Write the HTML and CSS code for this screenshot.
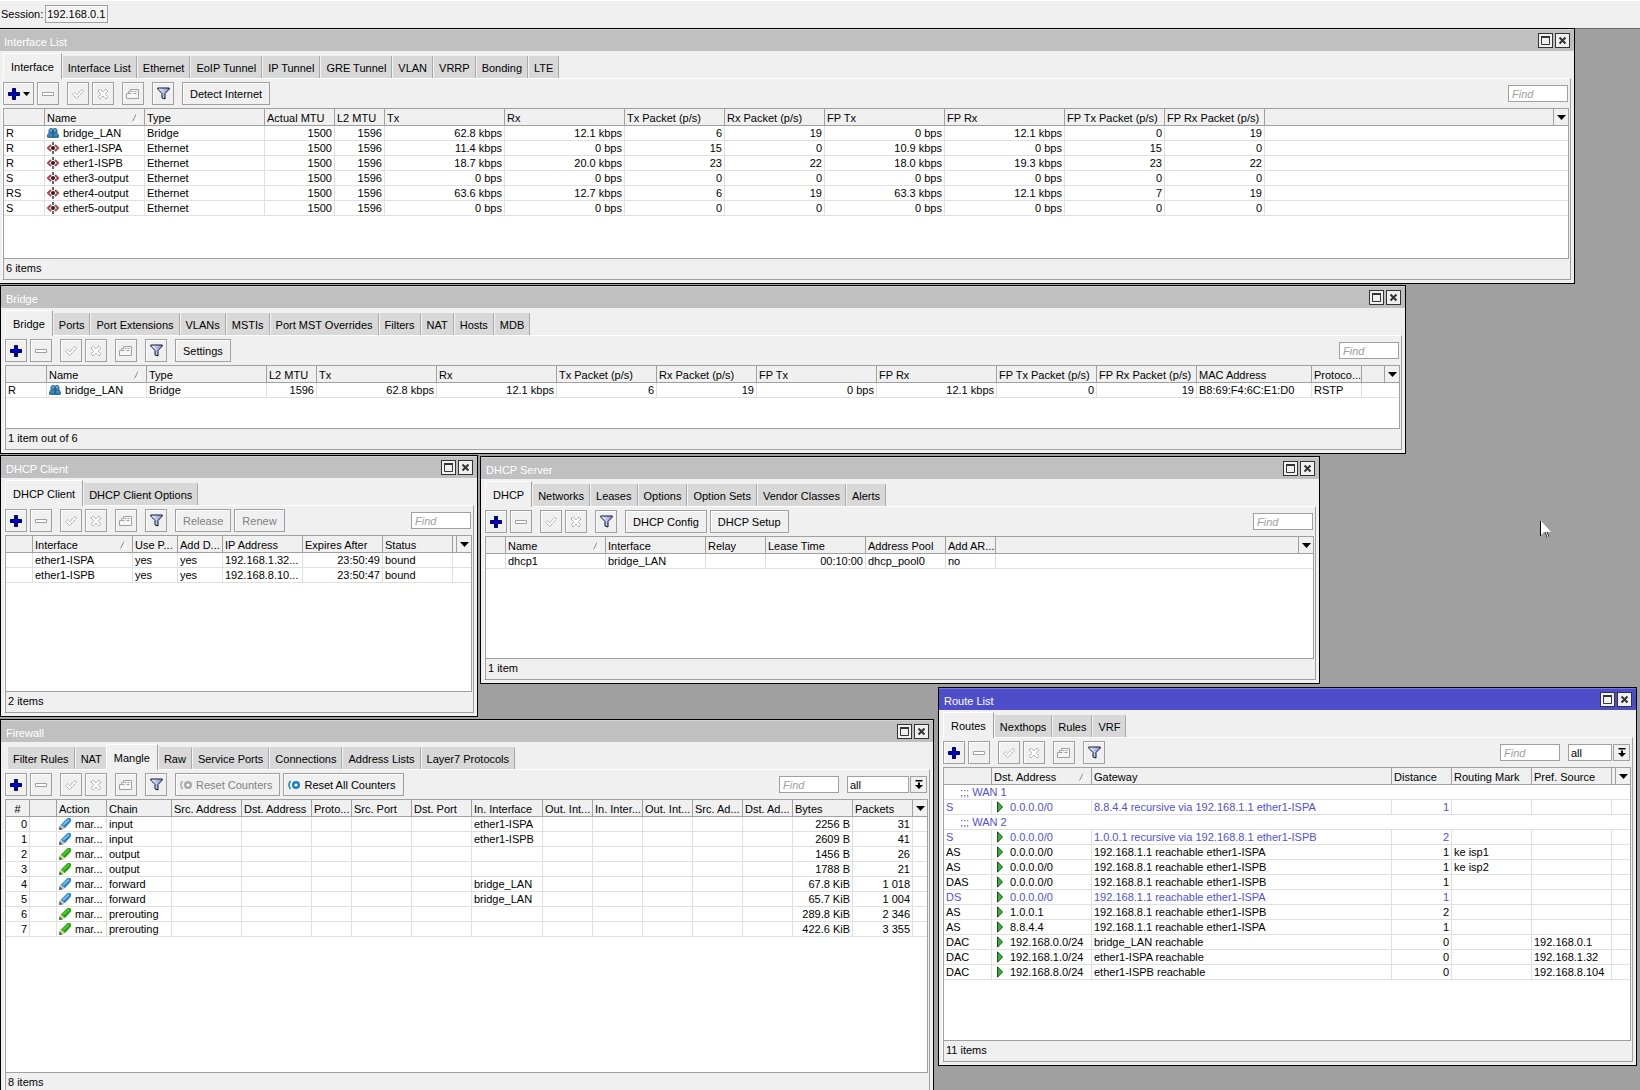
FILE: index.html
```html
<!DOCTYPE html>
<html lang="en">
<head>
    <meta charset="UTF-8">
    <meta name="viewport" content="width=device-width, initial-scale=1.0">
    <title>192.168.0.1 - Router Admin</title>
    <link rel="stylesheet" href="styles.css">
</head>
<body>
    <!-- icon sprite -->
    <svg class="sprite" aria-hidden="true">
        <defs>
            <linearGradient id="funnelFill" x1="0" x2="1" y1="0" y2="0">
                <stop offset="0" stop-color="#f4f6ff"/>
                <stop offset="1" stop-color="#7f8fd0"/>
            </linearGradient>
        </defs>
        <symbol id="i-plus" viewBox="0 0 12 12">
            <path d="M4.5 .5h3v4h4v3h-4v4h-3v-4h-4v-3h4z" fill="#0000c8" stroke="#000050"/>
        </symbol>
        <symbol id="i-minus" viewBox="0 0 12 12">
            <path d="M.5 4.5h11v3H.5z" fill="#fff" stroke="#a0a0a0"/>
        </symbol>
        <symbol id="i-check" viewBox="0 0 12 12">
            <path d="M.7 6.5 2.5 4.700 4.700 6.900 9.700 1.400 11.500 3.200 4.700 10.600z" fill="#fff" stroke="#a0a0a0" stroke-dasharray="1.500 .5"/>
        </symbol>
        <symbol id="i-cross" viewBox="0 0 12 12">
            <path d="M1 3 3 1l3 3 3-3 2 2-3 3 3 3-2 2-3-3-3 3-2-2 3-3z" fill="#fff" stroke="#a0a0a0" stroke-dasharray="1.500 .5"/>
        </symbol>
        <symbol id="i-note" viewBox="0 0 14 12">
            <path d="M4.500 1.500h8v9H.5v-5h2v-2h2z" fill="#f6f6f6" stroke="#a0a0a0"/>
            <path d="M2.500 5.500h3M5.500 3.500h2M8.500 3.500h2M7.500 5.500h3" fill="none" stroke="#a0a0a0"/>
        </symbol>
        <symbol id="i-funnel" viewBox="0 0 13 13">
            <path d="M.7 1h11.600v1L8 6.500V12l-3-1V6.500L.7 2z" fill="url(#funnelFill)" stroke="#101830"/>
        </symbol>
        <symbol id="i-down" viewBox="0 0 9 5">
            <path d="M0 0h9L4.500 5z" fill="#000"/>
        </symbol>
        <symbol id="i-drop" viewBox="0 0 8 9">
            <path d="M.5 0h7v1.500h-7zM3 2.500h2V5h3L4 9 0 5h3z" fill="#000"/>
        </symbol>
        <symbol id="i-max" viewBox="0 0 9 9">
            <path d="M.5 1.500h8v7h-8z" fill="none" stroke="#333"/>
            <path d="M0 0h9v2H0z" fill="#333"/>
        </symbol>
        <symbol id="i-close" viewBox="0 0 9 9">
            <path d="M1.500 1.500l6 6M7.500 1.500l-6 6" stroke="#333" stroke-width="2"/>
        </symbol>
        <symbol id="i-sort" viewBox="0 0 7 8">
            <path d="M4 0 7 7.500H1" fill="none" stroke="#fff"/>
            <path d="M.5 7.500 4 .5" stroke="#909090"/>
        </symbol>
        <symbol id="i-bridge" viewBox="0 0 12 12">
            <path d="M0 10V8l1.500-2L1.500 3 3 1h2l1 1 1-1h2l1.500 2v3L12 8v2l-1 1H1z" fill="#2f76a8"/>
            <path d="M3 2h2v2.500H3zM7 2h2v2.500H7z" fill="#68a8d0"/>
            <path d="M1.500 8h3.500M7 8h3.500" stroke="#5a9cc8"/>
            <path d="M6 3v7" stroke="#1a5682"/>
        </symbol>
        <symbol id="i-ether" viewBox="0 0 12 12">
            <path d="M4 3 1 6 4 9M8 3 11 6 8 9" fill="none" stroke="#b84050" stroke-width="2"/>
            <path d="M6 0v3M6 9v3" stroke="#333" stroke-width="1.500"/>
            <circle cx="6" cy="6" r="2" fill="#222"/>
        </symbol>
        <symbol id="i-pen-blue" viewBox="0 0 12 12">
            <path d="M0 12 .5 8 4 11.500z" fill="#555"/>
            <path d="M.5 8 2.500 5.500 6.500 9.500 4 11.500z" fill="#b8c0c8"/>
            <path d="M2 6.500 8 .5 9 0h2l1 1v2l-.5 1L6 10z" fill="#2a80c0"/>
            <path d="M4 7 10 1.500" stroke="#6cbcf0" stroke-width="2"/>
        </symbol>
        <symbol id="i-pen-green" viewBox="0 0 12 12">
            <path d="M0 12 .5 8 4 11.500z" fill="#2c7a1c"/>
            <path d="M.5 8 2.500 5.500 6.500 9.500 4 11.500z" fill="#d8d0a0"/>
            <path d="M2 6.500 8 .5 9 0h2l1 1v2l-.5 1L6 10z" fill="#24a010"/>
            <path d="M4 7 10 1.500" stroke="#4ccc30" stroke-width="2"/>
        </symbol>
        <symbol id="i-route" viewBox="0 0 12 12">
            <path d="M3.500.8V11.200L8.500 6z" fill="#30b830" stroke="#1c4c1c"/>
        </symbol>
        <symbol id="i-reset" viewBox="0 0 12 10">
            <path d="M2.500 1Q-.5 5 2.500 9" fill="none" stroke="currentColor" stroke-width="1.500"/>
            <circle cx="8" cy="5" r="2.800" fill="#fff" stroke="currentColor" stroke-width="2.400"/>
        </symbol>
    </svg>

    <header class="session-bar">
        <label for="session">Session:</label>
        <input id="session" class="session-input" type="text" value="192.168.0.1" readonly>
    </header>

    <main class="desktop">
        <!-- Interface List -->
        <section class="window win-interface">
            <div class="titlebar">
                <h2>Interface List</h2>
                <button class="win-btn" aria-label="Maximize"><svg width="9" height="9"><use href="#i-max"/></svg></button>
                <button class="win-btn" aria-label="Close"><svg width="9" height="9"><use href="#i-close"/></svg></button>
            </div>
            <nav class="tabs">
                <button class="tab active">Interface</button>
                <button class="tab">Interface List</button>
                <button class="tab">Ethernet</button>
                <button class="tab">EoIP Tunnel</button>
                <button class="tab">IP Tunnel</button>
                <button class="tab">GRE Tunnel</button>
                <button class="tab">VLAN</button>
                <button class="tab">VRRP</button>
                <button class="tab">Bonding</button>
                <button class="tab">LTE</button>
            </nav>
            <div class="panel">
                <div class="toolbar">
                    <div class="group">
                        <button class="btn icon-btn add-menu" aria-label="Add"><svg width="12" height="12"><use href="#i-plus"/></svg><svg width="7" height="4"><use href="#i-down"/></svg></button>
                        <button class="btn icon-btn" aria-label="Remove" disabled><svg width="12" height="12"><use href="#i-minus"/></svg></button>
                    </div>
                    <div class="group">
                        <button class="btn icon-btn" aria-label="Enable" disabled><svg width="12" height="12"><use href="#i-check"/></svg></button>
                        <button class="btn icon-btn" aria-label="Disable" disabled><svg width="12" height="12"><use href="#i-cross"/></svg></button>
                    </div>
                    <button class="btn icon-btn" aria-label="Comment" disabled><svg width="14" height="12"><use href="#i-note"/></svg></button>
                    <button class="btn icon-btn" aria-label="Filter"><svg width="13" height="13"><use href="#i-funnel"/></svg></button>
                    <button class="btn">Detect Internet</button>
                    <input class="find" type="text" placeholder="Find" aria-label="Find">
                </div>
                <div class="list">
                    <table>
                        <colgroup><col class="w41"><col class="w100"><col class="w120"><col class="w70"><col class="w50"><col class="w120"><col class="w120"><col class="w100"><col class="w100"><col class="w120"><col class="w120"><col class="w100"><col class="w100"><col></colgroup>
                        <thead>
                            <tr><th></th><th>Name<svg class="sort" width="7" height="8"><use href="#i-sort"/></svg></th><th>Type</th><th>Actual MTU</th><th>L2 MTU</th><th>Tx</th><th>Rx</th><th>Tx Packet (p/s)</th><th>Rx Packet (p/s)</th><th>FP Tx</th><th>FP Rx</th><th>FP Tx Packet (p/s)</th><th>FP Rx Packet (p/s)</th><th class="rest"><button class="col-menu" aria-label="Columns"><svg width="9" height="5"><use href="#i-down"/></svg></button></th></tr>
                        </thead>
                        <tbody>
                            <tr><td>R</td><td><svg class="ico" width="12" height="12"><use href="#i-bridge"/></svg>bridge_LAN</td><td>Bridge</td><td class="num">1500</td><td class="num">1596</td><td class="num">62.8 kbps</td><td class="num">12.1 kbps</td><td class="num">6</td><td class="num">19</td><td class="num">0 bps</td><td class="num">12.1 kbps</td><td class="num">0</td><td class="num">19</td><td></td></tr>
                            <tr><td>R</td><td><svg class="ico" width="12" height="12"><use href="#i-ether"/></svg>ether1-ISPA</td><td>Ethernet</td><td class="num">1500</td><td class="num">1596</td><td class="num">11.4 kbps</td><td class="num">0 bps</td><td class="num">15</td><td class="num">0</td><td class="num">10.9 kbps</td><td class="num">0 bps</td><td class="num">15</td><td class="num">0</td><td></td></tr>
                            <tr><td>R</td><td><svg class="ico" width="12" height="12"><use href="#i-ether"/></svg>ether1-ISPB</td><td>Ethernet</td><td class="num">1500</td><td class="num">1596</td><td class="num">18.7 kbps</td><td class="num">20.0 kbps</td><td class="num">23</td><td class="num">22</td><td class="num">18.0 kbps</td><td class="num">19.3 kbps</td><td class="num">23</td><td class="num">22</td><td></td></tr>
                            <tr><td>S</td><td><svg class="ico" width="12" height="12"><use href="#i-ether"/></svg>ether3-output</td><td>Ethernet</td><td class="num">1500</td><td class="num">1596</td><td class="num">0 bps</td><td class="num">0 bps</td><td class="num">0</td><td class="num">0</td><td class="num">0 bps</td><td class="num">0 bps</td><td class="num">0</td><td class="num">0</td><td></td></tr>
                            <tr><td>RS</td><td><svg class="ico" width="12" height="12"><use href="#i-ether"/></svg>ether4-output</td><td>Ethernet</td><td class="num">1500</td><td class="num">1596</td><td class="num">63.6 kbps</td><td class="num">12.7 kbps</td><td class="num">6</td><td class="num">19</td><td class="num">63.3 kbps</td><td class="num">12.1 kbps</td><td class="num">7</td><td class="num">19</td><td></td></tr>
                            <tr><td>S</td><td><svg class="ico" width="12" height="12"><use href="#i-ether"/></svg>ether5-output</td><td>Ethernet</td><td class="num">1500</td><td class="num">1596</td><td class="num">0 bps</td><td class="num">0 bps</td><td class="num">0</td><td class="num">0</td><td class="num">0 bps</td><td class="num">0 bps</td><td class="num">0</td><td class="num">0</td><td></td></tr>
                        </tbody>
                    </table>
                </div>
                <div class="status">6 items</div>
            </div>
        </section>

        <!-- Bridge -->
        <section class="window win-bridge">
            <div class="titlebar">
                <h2>Bridge</h2>
                <button class="win-btn" aria-label="Maximize"><svg width="9" height="9"><use href="#i-max"/></svg></button>
                <button class="win-btn" aria-label="Close"><svg width="9" height="9"><use href="#i-close"/></svg></button>
            </div>
            <nav class="tabs">
                <button class="tab active">Bridge</button>
                <button class="tab">Ports</button>
                <button class="tab">Port Extensions</button>
                <button class="tab">VLANs</button>
                <button class="tab">MSTIs</button>
                <button class="tab">Port MST Overrides</button>
                <button class="tab">Filters</button>
                <button class="tab">NAT</button>
                <button class="tab">Hosts</button>
                <button class="tab">MDB</button>
            </nav>
            <div class="panel">
                <div class="toolbar">
                    <div class="group">
                        <button class="btn icon-btn" aria-label="Add"><svg width="12" height="12"><use href="#i-plus"/></svg></button>
                        <button class="btn icon-btn" aria-label="Remove" disabled><svg width="12" height="12"><use href="#i-minus"/></svg></button>
                    </div>
                    <div class="group">
                        <button class="btn icon-btn" aria-label="Enable" disabled><svg width="12" height="12"><use href="#i-check"/></svg></button>
                        <button class="btn icon-btn" aria-label="Disable" disabled><svg width="12" height="12"><use href="#i-cross"/></svg></button>
                    </div>
                    <button class="btn icon-btn" aria-label="Comment" disabled><svg width="14" height="12"><use href="#i-note"/></svg></button>
                    <button class="btn icon-btn" aria-label="Filter"><svg width="13" height="13"><use href="#i-funnel"/></svg></button>
                    <button class="btn">Settings</button>
                    <input class="find" type="text" placeholder="Find" aria-label="Find">
                </div>
                <div class="list">
                    <table>
                        <colgroup><col class="w41"><col class="w100"><col class="w120"><col class="w50"><col class="w120"><col class="w120"><col class="w100"><col class="w100"><col class="w120"><col class="w120"><col class="w100"><col class="w100"><col class="w115"><col class="w50"><col></colgroup>
                        <thead>
                            <tr><th></th><th>Name<svg class="sort" width="7" height="8"><use href="#i-sort"/></svg></th><th>Type</th><th>L2 MTU</th><th>Tx</th><th>Rx</th><th>Tx Packet (p/s)</th><th>Rx Packet (p/s)</th><th>FP Tx</th><th>FP Rx</th><th>FP Tx Packet (p/s)</th><th>FP Rx Packet (p/s)</th><th>MAC Address</th><th>Protoco...</th><th class="rest"><button class="col-menu" aria-label="Columns"><svg width="9" height="5"><use href="#i-down"/></svg></button></th></tr>
                        </thead>
                        <tbody>
                            <tr><td>R</td><td><svg class="ico" width="12" height="12"><use href="#i-bridge"/></svg>bridge_LAN</td><td>Bridge</td><td class="num">1596</td><td class="num">62.8 kbps</td><td class="num">12.1 kbps</td><td class="num">6</td><td class="num">19</td><td class="num">0 bps</td><td class="num">12.1 kbps</td><td class="num">0</td><td class="num">19</td><td>B8:69:F4:6C:E1:D0</td><td>RSTP</td><td></td></tr>
                        </tbody>
                    </table>
                </div>
                <div class="status">1 item out of 6</div>
            </div>
        </section>

        <!-- DHCP Client -->
        <section class="window win-dhcp-client">
            <div class="titlebar">
                <h2>DHCP Client</h2>
                <button class="win-btn" aria-label="Maximize"><svg width="9" height="9"><use href="#i-max"/></svg></button>
                <button class="win-btn" aria-label="Close"><svg width="9" height="9"><use href="#i-close"/></svg></button>
            </div>
            <nav class="tabs">
                <button class="tab active">DHCP Client</button>
                <button class="tab">DHCP Client Options</button>
            </nav>
            <div class="panel">
                <div class="toolbar">
                    <div class="group">
                        <button class="btn icon-btn" aria-label="Add"><svg width="12" height="12"><use href="#i-plus"/></svg></button>
                        <button class="btn icon-btn" aria-label="Remove" disabled><svg width="12" height="12"><use href="#i-minus"/></svg></button>
                    </div>
                    <div class="group">
                        <button class="btn icon-btn" aria-label="Enable" disabled><svg width="12" height="12"><use href="#i-check"/></svg></button>
                        <button class="btn icon-btn" aria-label="Disable" disabled><svg width="12" height="12"><use href="#i-cross"/></svg></button>
                    </div>
                    <button class="btn icon-btn" aria-label="Comment" disabled><svg width="14" height="12"><use href="#i-note"/></svg></button>
                    <button class="btn icon-btn" aria-label="Filter"><svg width="13" height="13"><use href="#i-funnel"/></svg></button>
                    <div class="group">
                        <button class="btn" disabled>Release</button>
                        <button class="btn" disabled>Renew</button>
                    </div>
                    <input class="find" type="text" placeholder="Find" aria-label="Find">
                </div>
                <div class="list">
                    <table>
                        <colgroup><col class="w27"><col class="w100"><col class="w45"><col class="w45"><col class="w80"><col class="w80"><col class="w70"><col></colgroup>
                        <thead>
                            <tr><th></th><th>Interface<svg class="sort" width="7" height="8"><use href="#i-sort"/></svg></th><th>Use P...</th><th>Add D...</th><th>IP Address</th><th>Expires After</th><th>Status</th><th class="rest"><button class="col-menu" aria-label="Columns"><svg width="9" height="5"><use href="#i-down"/></svg></button></th></tr>
                        </thead>
                        <tbody>
                            <tr><td></td><td>ether1-ISPA</td><td>yes</td><td>yes</td><td>192.168.1.32...</td><td class="num">23:50:49</td><td>bound</td><td></td></tr>
                            <tr><td></td><td>ether1-ISPB</td><td>yes</td><td>yes</td><td>192.168.8.10...</td><td class="num">23:50:47</td><td>bound</td><td></td></tr>
                        </tbody>
                    </table>
                </div>
                <div class="status">2 items</div>
            </div>
        </section>

        <!-- DHCP Server -->
        <section class="window win-dhcp-server">
            <div class="titlebar">
                <h2>DHCP Server</h2>
                <button class="win-btn" aria-label="Maximize"><svg width="9" height="9"><use href="#i-max"/></svg></button>
                <button class="win-btn" aria-label="Close"><svg width="9" height="9"><use href="#i-close"/></svg></button>
            </div>
            <nav class="tabs">
                <button class="tab active">DHCP</button>
                <button class="tab">Networks</button>
                <button class="tab">Leases</button>
                <button class="tab">Options</button>
                <button class="tab">Option Sets</button>
                <button class="tab">Vendor Classes</button>
                <button class="tab">Alerts</button>
            </nav>
            <div class="panel">
                <div class="toolbar">
                    <div class="group">
                        <button class="btn icon-btn" aria-label="Add"><svg width="12" height="12"><use href="#i-plus"/></svg></button>
                        <button class="btn icon-btn" aria-label="Remove" disabled><svg width="12" height="12"><use href="#i-minus"/></svg></button>
                    </div>
                    <div class="group">
                        <button class="btn icon-btn" aria-label="Enable" disabled><svg width="12" height="12"><use href="#i-check"/></svg></button>
                        <button class="btn icon-btn" aria-label="Disable" disabled><svg width="12" height="12"><use href="#i-cross"/></svg></button>
                    </div>
                    <button class="btn icon-btn" aria-label="Filter"><svg width="13" height="13"><use href="#i-funnel"/></svg></button>
                    <div class="group">
                        <button class="btn">DHCP Config</button>
                        <button class="btn">DHCP Setup</button>
                    </div>
                    <input class="find" type="text" placeholder="Find" aria-label="Find">
                </div>
                <div class="list">
                    <table>
                        <colgroup><col class="w20"><col class="w100"><col class="w100"><col class="w60"><col class="w100"><col class="w80"><col class="w50"><col></colgroup>
                        <thead>
                            <tr><th></th><th>Name<svg class="sort" width="7" height="8"><use href="#i-sort"/></svg></th><th>Interface</th><th>Relay</th><th>Lease Time</th><th>Address Pool</th><th>Add AR...</th><th class="rest"><button class="col-menu" aria-label="Columns"><svg width="9" height="5"><use href="#i-down"/></svg></button></th></tr>
                        </thead>
                        <tbody>
                            <tr><td></td><td>dhcp1</td><td>bridge_LAN</td><td></td><td class="num">00:10:00</td><td>dhcp_pool0</td><td>no</td><td></td></tr>
                        </tbody>
                    </table>
                </div>
                <div class="status">1 item</div>
            </div>
        </section>

        <!-- Firewall -->
        <section class="window win-firewall">
            <div class="titlebar">
                <h2>Firewall</h2>
                <button class="win-btn" aria-label="Maximize"><svg width="9" height="9"><use href="#i-max"/></svg></button>
                <button class="win-btn" aria-label="Close"><svg width="9" height="9"><use href="#i-close"/></svg></button>
            </div>
            <nav class="tabs">
                <button class="tab">Filter Rules</button>
                <button class="tab">NAT</button>
                <button class="tab active">Mangle</button>
                <button class="tab">Raw</button>
                <button class="tab">Service Ports</button>
                <button class="tab">Connections</button>
                <button class="tab">Address Lists</button>
                <button class="tab">Layer7 Protocols</button>
            </nav>
            <div class="panel">
                <div class="toolbar">
                    <div class="group">
                        <button class="btn icon-btn" aria-label="Add"><svg width="12" height="12"><use href="#i-plus"/></svg></button>
                        <button class="btn icon-btn" aria-label="Remove" disabled><svg width="12" height="12"><use href="#i-minus"/></svg></button>
                    </div>
                    <div class="group">
                        <button class="btn icon-btn" aria-label="Enable" disabled><svg width="12" height="12"><use href="#i-check"/></svg></button>
                        <button class="btn icon-btn" aria-label="Disable" disabled><svg width="12" height="12"><use href="#i-cross"/></svg></button>
                    </div>
                    <button class="btn icon-btn" aria-label="Comment" disabled><svg width="14" height="12"><use href="#i-note"/></svg></button>
                    <button class="btn icon-btn" aria-label="Filter"><svg width="13" height="13"><use href="#i-funnel"/></svg></button>
                    <div class="group">
                        <button class="btn reset-btn" disabled><svg width="12" height="10"><use href="#i-reset"/></svg>Reset Counters</button>
                        <button class="btn reset-btn"><svg width="12" height="10"><use href="#i-reset"/></svg>Reset All Counters</button>
                    </div>
                    <input class="find" type="text" placeholder="Find" aria-label="Find">
                    <div class="chooser">
                        <select class="choice choice-wide" aria-label="Chain"><option>all</option></select>
                        <button class="choice-btn" aria-label="Open list"><svg width="8" height="9"><use href="#i-drop"/></svg></button>
                    </div>
                </div>
                <div class="list">
                    <table>
                        <colgroup><col class="w24"><col class="w27"><col class="w50"><col class="w65"><col class="w70"><col class="w70"><col class="w40"><col class="w60"><col class="w60"><col class="w71"><col class="w50"><col class="w50"><col class="w50"><col class="w50"><col class="w50"><col class="w60"><col class="w60"><col></colgroup>
                        <thead>
                            <tr><th class="mid">#</th><th></th><th>Action</th><th>Chain</th><th>Src. Address</th><th>Dst. Address</th><th>Proto...</th><th>Src. Port</th><th>Dst. Port</th><th>In. Interface</th><th>Out. Int...</th><th>In. Inter...</th><th>Out. Int...</th><th>Src. Ad...</th><th>Dst. Ad...</th><th>Bytes</th><th>Packets</th><th class="rest"><button class="col-menu" aria-label="Columns"><svg width="9" height="5"><use href="#i-down"/></svg></button></th></tr>
                        </thead>
                        <tbody>
                            <tr><td class="num">0</td><td></td><td><svg class="ico" width="12" height="12"><use href="#i-pen-blue"/></svg>mar...</td><td>input</td><td></td><td></td><td></td><td></td><td></td><td>ether1-ISPA</td><td></td><td></td><td></td><td></td><td></td><td class="num">2256 B</td><td class="num">31</td><td></td></tr>
                            <tr><td class="num">1</td><td></td><td><svg class="ico" width="12" height="12"><use href="#i-pen-blue"/></svg>mar...</td><td>input</td><td></td><td></td><td></td><td></td><td></td><td>ether1-ISPB</td><td></td><td></td><td></td><td></td><td></td><td class="num">2609 B</td><td class="num">41</td><td></td></tr>
                            <tr><td class="num">2</td><td></td><td><svg class="ico" width="12" height="12"><use href="#i-pen-green"/></svg>mar...</td><td>output</td><td></td><td></td><td></td><td></td><td></td><td></td><td></td><td></td><td></td><td></td><td></td><td class="num">1456 B</td><td class="num">26</td><td></td></tr>
                            <tr><td class="num">3</td><td></td><td><svg class="ico" width="12" height="12"><use href="#i-pen-green"/></svg>mar...</td><td>output</td><td></td><td></td><td></td><td></td><td></td><td></td><td></td><td></td><td></td><td></td><td></td><td class="num">1788 B</td><td class="num">21</td><td></td></tr>
                            <tr><td class="num">4</td><td></td><td><svg class="ico" width="12" height="12"><use href="#i-pen-blue"/></svg>mar...</td><td>forward</td><td></td><td></td><td></td><td></td><td></td><td>bridge_LAN</td><td></td><td></td><td></td><td></td><td></td><td class="num">67.8 KiB</td><td class="num">1 018</td><td></td></tr>
                            <tr><td class="num">5</td><td></td><td><svg class="ico" width="12" height="12"><use href="#i-pen-blue"/></svg>mar...</td><td>forward</td><td></td><td></td><td></td><td></td><td></td><td>bridge_LAN</td><td></td><td></td><td></td><td></td><td></td><td class="num">65.7 KiB</td><td class="num">1 004</td><td></td></tr>
                            <tr><td class="num">6</td><td></td><td><svg class="ico" width="12" height="12"><use href="#i-pen-green"/></svg>mar...</td><td>prerouting</td><td></td><td></td><td></td><td></td><td></td><td></td><td></td><td></td><td></td><td></td><td></td><td class="num">289.8 KiB</td><td class="num">2 346</td><td></td></tr>
                            <tr><td class="num">7</td><td></td><td><svg class="ico" width="12" height="12"><use href="#i-pen-green"/></svg>mar...</td><td>prerouting</td><td></td><td></td><td></td><td></td><td></td><td></td><td></td><td></td><td></td><td></td><td></td><td class="num">422.6 KiB</td><td class="num">3 355</td><td></td></tr>
                        </tbody>
                    </table>
                </div>
                <div class="status">8 items</div>
            </div>
        </section>

        <!-- Route List, focused window -->
        <section class="window win-routes focused">
            <div class="titlebar">
                <h2>Route List</h2>
                <button class="win-btn" aria-label="Maximize"><svg width="9" height="9"><use href="#i-max"/></svg></button>
                <button class="win-btn" aria-label="Close"><svg width="9" height="9"><use href="#i-close"/></svg></button>
            </div>
            <nav class="tabs">
                <button class="tab active">Routes</button>
                <button class="tab">Nexthops</button>
                <button class="tab">Rules</button>
                <button class="tab">VRF</button>
            </nav>
            <div class="panel">
                <div class="toolbar">
                    <div class="group">
                        <button class="btn icon-btn" aria-label="Add"><svg width="12" height="12"><use href="#i-plus"/></svg></button>
                        <button class="btn icon-btn" aria-label="Remove" disabled><svg width="12" height="12"><use href="#i-minus"/></svg></button>
                    </div>
                    <div class="group">
                        <button class="btn icon-btn" aria-label="Enable" disabled><svg width="12" height="12"><use href="#i-check"/></svg></button>
                        <button class="btn icon-btn" aria-label="Disable" disabled><svg width="12" height="12"><use href="#i-cross"/></svg></button>
                    </div>
                    <button class="btn icon-btn" aria-label="Comment" disabled><svg width="14" height="12"><use href="#i-note"/></svg></button>
                    <button class="btn icon-btn" aria-label="Filter"><svg width="13" height="13"><use href="#i-funnel"/></svg></button>
                    <input class="find" type="text" placeholder="Find" aria-label="Find">
                    <div class="chooser">
                        <select class="choice" aria-label="Routing table"><option>all</option></select>
                        <button class="choice-btn" aria-label="Open list"><svg width="8" height="9"><use href="#i-drop"/></svg></button>
                    </div>
                </div>
                <div class="list">
                    <table>
                        <colgroup><col class="w48"><col class="w100"><col class="w300"><col class="w60"><col class="w80"><col class="w80"><col></colgroup>
                        <thead>
                            <tr><th></th><th>Dst. Address<svg class="sort" width="7" height="8"><use href="#i-sort"/></svg></th><th>Gateway</th><th>Distance</th><th>Routing Mark</th><th>Pref. Source</th><th class="rest"><button class="col-menu" aria-label="Columns"><svg width="9" height="5"><use href="#i-down"/></svg></button></th></tr>
                        </thead>
                        <tbody>
                            <tr class="inactive"><td class="comment" colspan="7">;;; WAN 1</td></tr>
                            <tr class="inactive"><td>S</td><td><svg class="ico" width="12" height="12"><use href="#i-route"/></svg>0.0.0.0/0</td><td>8.8.4.4 recursive via 192.168.1.1 ether1-ISPA</td><td class="num">1</td><td></td><td></td><td></td></tr>
                            <tr class="inactive"><td class="comment" colspan="7">;;; WAN 2</td></tr>
                            <tr class="inactive"><td>S</td><td><svg class="ico" width="12" height="12"><use href="#i-route"/></svg>0.0.0.0/0</td><td>1.0.0.1 recursive via 192.168.8.1 ether1-ISPB</td><td class="num">2</td><td></td><td></td><td></td></tr>
                            <tr><td>AS</td><td><svg class="ico" width="12" height="12"><use href="#i-route"/></svg>0.0.0.0/0</td><td>192.168.1.1 reachable ether1-ISPA</td><td class="num">1</td><td>ke isp1</td><td></td><td></td></tr>
                            <tr><td>AS</td><td><svg class="ico" width="12" height="12"><use href="#i-route"/></svg>0.0.0.0/0</td><td>192.168.8.1 reachable ether1-ISPB</td><td class="num">1</td><td>ke isp2</td><td></td><td></td></tr>
                            <tr><td>DAS</td><td><svg class="ico" width="12" height="12"><use href="#i-route"/></svg>0.0.0.0/0</td><td>192.168.8.1 reachable ether1-ISPB</td><td class="num">1</td><td></td><td></td><td></td></tr>
                            <tr class="inactive"><td>DS</td><td><svg class="ico" width="12" height="12"><use href="#i-route"/></svg>0.0.0.0/0</td><td>192.168.1.1 reachable ether1-ISPA</td><td class="num">1</td><td></td><td></td><td></td></tr>
                            <tr><td>AS</td><td><svg class="ico" width="12" height="12"><use href="#i-route"/></svg>1.0.0.1</td><td>192.168.8.1 reachable ether1-ISPB</td><td class="num">2</td><td></td><td></td><td></td></tr>
                            <tr><td>AS</td><td><svg class="ico" width="12" height="12"><use href="#i-route"/></svg>8.8.4.4</td><td>192.168.1.1 reachable ether1-ISPA</td><td class="num">1</td><td></td><td></td><td></td></tr>
                            <tr><td>DAC</td><td><svg class="ico" width="12" height="12"><use href="#i-route"/></svg>192.168.0.0/24</td><td>bridge_LAN reachable</td><td class="num">0</td><td></td><td>192.168.0.1</td><td></td></tr>
                            <tr><td>DAC</td><td><svg class="ico" width="12" height="12"><use href="#i-route"/></svg>192.168.1.0/24</td><td>ether1-ISPA reachable</td><td class="num">0</td><td></td><td>192.168.1.32</td><td></td></tr>
                            <tr><td>DAC</td><td><svg class="ico" width="12" height="12"><use href="#i-route"/></svg>192.168.8.0/24</td><td>ether1-ISPB reachable</td><td class="num">0</td><td></td><td>192.168.8.104</td><td></td></tr>
                        </tbody>
                    </table>
                </div>
                <div class="status">11 items</div>
            </div>
        </section>

        <svg class="pointer" width="12" height="19" viewBox="0 0 12 19">
            <path d="M1 1v14l3-3h7z" fill="#fff"/>
            <path d="M.5 1v15" stroke="#000"/>
            <path d="M6 12l2 5" stroke="#333" stroke-width="3"/>
            <path d="M6 12l2 5" stroke="#fff"/>
        </svg>
    </main>
</body>
</html>
```

FILE: styles.css
```css
* {
    box-sizing: border-box;
}
body {
    margin: 0;
    height: 100vh;
    display: flex;
    flex-direction: column;
    overflow: hidden;
    background: #a0a0a0;
    color: #000;
    font-family: "Liberation Sans", Arial, sans-serif;
    font-size: 11px;
    line-height: 14px;
}
button, input, select {
    font: inherit;
    color: inherit;
    margin: 0;
    padding: 0;
    border-radius: 0;
}
svg {
    display: block;
    flex: none;
}
.sprite {
    position: absolute;
    width: 0;
    height: 0;
}

/* session bar */
.session-bar {
    display: flex;
    align-items: center;
    gap: 2px;
    flex: none;
    height: 28px;
    padding: 0 1px 2px;
    background: #f0f0f0;
    border-top: 1px solid #fff;
}
.session-input {
    width: 63px;
    height: 18px;
    padding: 0 1px;
    background: #f4f4f4;
    border: 1px solid #a0a0a0;
}

/* desktop and windows */
.desktop {
    position: relative;
    flex: 1;
    overflow: hidden;
    box-shadow: inset 0 1px 0 #696969;
}
.window {
    position: absolute;
    display: flex;
    flex-direction: column;
    background: #f0f0f0;
    border: 1px solid #000;
}
.win-interface {
    left: -2px;
    top: 0;
    width: 1577px;
    height: 256px;
}
.win-bridge {
    left: 0;
    top: 257px;
    width: 1406px;
    height: 169px;
}
.win-dhcp-client {
    left: 0;
    top: 427px;
    width: 478px;
    height: 262px;
}
.win-dhcp-server {
    left: 480px;
    top: 428px;
    width: 840px;
    height: 228px;
}
.win-firewall {
    left: 0;
    top: 691px;
    width: 934px;
    height: 379px;
}
.win-routes {
    left: 938px;
    top: 659px;
    width: 699px;
    height: 379px;
}
.titlebar {
    display: flex;
    align-items: center;
    gap: 2px;
    flex: none;
    height: 22px;
    padding: 0 4px 0 5px;
    background: #c0c0c0;
    border-top: 1px solid #d4d4d4;
}
.titlebar h2 {
    flex: 1;
    margin: 0;
    padding-top: 3px;
    color: #fff;
    font-size: 11px;
    font-weight: normal;
}
.focused .titlebar {
    background: #4e4ecb;
    border-top-color: #7878e0;
}
.win-btn {
    display: flex;
    align-items: center;
    justify-content: center;
    width: 15px;
    height: 15px;
    background: #f0f0f0;
    border: 1px solid #333;
}

/* tabs */
.tabs {
    display: flex;
    align-items: flex-end;
    flex: none;
    height: 27px;
    padding-left: 6px;
}
.tab {
    height: 22px;
    padding: 1px 5px 0;
    background: #d8d8d8;
    border: 1px solid #d8d8d8;
    border-left-color: #f4f4f4;
    border-right-color: #a8a8a8;
    border-bottom: 0;
    white-space: nowrap;
}
.tab.active {
    position: relative;
    height: 26px;
    margin: 0 0 -1px -2px;
    padding: 0 7px;
    background: #f0f0f0;
    border-color: #fff;
    border-right-color: #a0a0a0;
}

/* toolbar */
.panel {
    display: flex;
    flex-direction: column;
    flex: 1;
    min-height: 0;
    margin: 0 3px 3px;
    padding-right: 1px;
    border: 1px solid #fff;
    border-right-color: #a0a0a0;
    border-bottom-color: #a0a0a0;
}
.toolbar {
    display: flex;
    align-items: center;
    gap: 8px;
    flex: none;
    height: 29px;
    padding-right: 1px;
}
.group {
    display: flex;
    gap: 3px;
}
.btn {
    display: flex;
    align-items: center;
    justify-content: center;
    height: 23px;
    padding: 0 7px;
    background: #f0f0f0;
    border: 1px solid #a0a0a0;
    box-shadow: inset 1px 1px 0 #fff;
    white-space: nowrap;
}
.btn:disabled {
    color: #808080;
}
.icon-btn {
    width: 22px;
    padding: 0;
}
.add-menu {
    width: 31px;
    gap: 3px;
}
.reset-btn {
    gap: 4px;
    padding: 0 7px 0 4px;
}
.reset-btn svg {
    color: #1a80c0;
}
.reset-btn:disabled svg {
    color: #a8a8a8;
}
.find {
    width: 60px;
    height: 17px;
    margin-left: auto;
    padding: 0 3px;
    background: #fff;
    border: 1px solid #a0a0a0;
}
.find::placeholder {
    color: #a0a0a0;
    font-style: italic;
    opacity: 1;
}
.chooser {
    display: flex;
    gap: 1px;
}
.choice {
    appearance: none;
    width: 44px;
    height: 17px;
    padding: 0 2px;
    background: #fff;
    border: 1px solid #a0a0a0;
}
.choice-wide {
    width: 62px;
}
.choice-btn {
    display: flex;
    align-items: center;
    justify-content: center;
    width: 17px;
    height: 17px;
    background: #f0f0f0;
    border: 1px solid #a0a0a0;
}

/* lists */
.list {
    flex: 1;
    min-height: 0;
    overflow: hidden;
    background: #fff;
    border: 1px solid #a0a0a0;
}
table {
    width: 100%;
    table-layout: fixed;
    border-collapse: separate;
    border-spacing: 0;
}
th {
    height: 17px;
    padding: 1px 2px 0;
    background: #f0f0f0;
    border-right: 1px solid #a0a0a0;
    border-bottom: 1px solid #a0a0a0;
    font-weight: normal;
    text-align: left;
    white-space: nowrap;
}
td {
    height: 15px;
    padding: 0 2px;
    border-right: 1px solid #e0e0e0;
    border-bottom: 1px solid #e0e0e0;
    white-space: nowrap;
    overflow: hidden;
}
th:last-child, td:last-child {
    border-right: 0;
}
.num {
    text-align: right;
}
.mid {
    text-align: center;
}
.rest {
    padding: 0;
}
.inactive {
    color: #5050dc;
}
.comment {
    padding-left: 16px;
}
.sort {
    float: right;
    margin: 3px 3px 0 0;
}
.ico {
    float: left;
    margin: 1px 4px 0 0;
}
.col-menu {
    display: flex;
    align-items: center;
    justify-content: center;
    float: right;
    width: 15px;
    height: 16px;
    margin-left: -1px;
    background: #f0f0f0;
    border: 0;
    border-left: 1px solid #a0a0a0;
}
.status {
    flex: none;
    height: 20px;
    padding: 2px 2px 0;
    border-left: 1px solid #a0a0a0;
}

/* column widths */
.w20 { width: 20px; }
.w24 { width: 24px; }
.w27 { width: 27px; }
.w40 { width: 40px; }
.w41 { width: 41px; }
.w45 { width: 45px; }
.w48 { width: 48px; }
.w50 { width: 50px; }
.w60 { width: 60px; }
.w65 { width: 65px; }
.w70 { width: 70px; }
.w71 { width: 71px; }
.w80 { width: 80px; }
.w100 { width: 100px; }
.w115 { width: 115px; }
.w120 { width: 120px; }
.w300 { width: 300px; }

.pointer {
    position: absolute;
    left: 1540px;
    top: 492px;
}
```
